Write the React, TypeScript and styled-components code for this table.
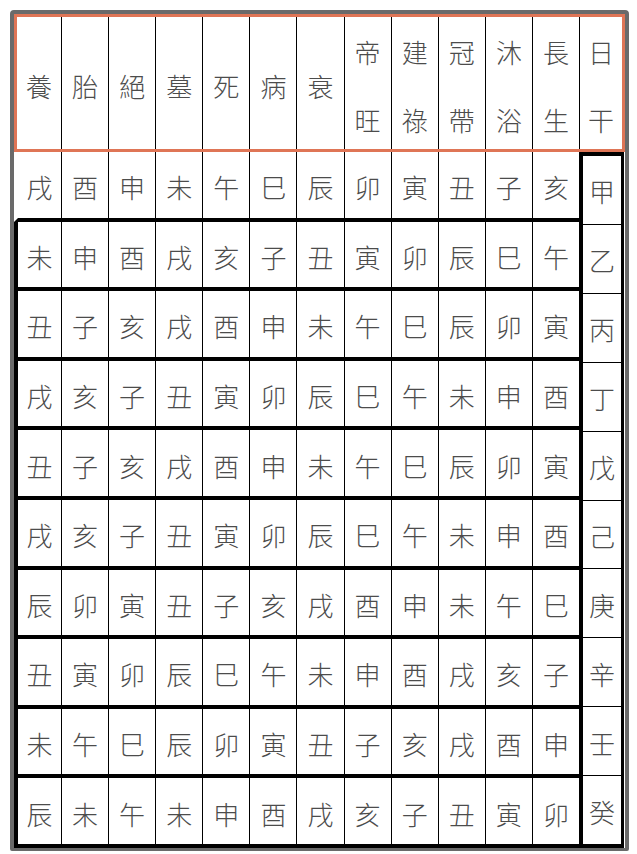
import React from 'react'
import styled, { createGlobalStyle } from 'styled-components'

const GlobalStyle = createGlobalStyle`
    html, body {
        margin: 0;
        padding: 0;
        background: #ffffff;
    }
    * {
        box-sizing: border-box;
    }
`

const Page = styled.div`
    padding: 10px;
    font-family: "Noto Sans CJK TC", "Noto Sans CJK JP", sans-serif;
    font-weight: 300;
    color: #4c4c4c;
`

const Frame = styled.div`
    width: 619px;
    border: 4px solid #6a6a6a;
    border-bottom-width: 3px;
    border-radius: 4px 4px 2px 2px;
`

const Header = styled.div`
    display: grid;
    grid-template-columns: 44px repeat(11, 47.1px) 1fr;
    height: 138px;
    border: 3px solid #df7556;
`

const HeadCell = styled.div<{ $first?: boolean }>`
    display: flex;
    flex-direction: column;
    align-items: center;
    justify-content: center;
    gap: 42px;
    padding-top: 5px;
    font-size: 26px;
    line-height: 26px;
    border-left: ${p => (p.$first ? 'none' : '1px solid #000')};
`

const Body = styled.div`
    display: flex;
    height: 696px;
`

const Rows = styled.div`
    display: flex;
    flex-direction: column;
    width: 565px;
`

const Row = styled.div<{ $open?: boolean }>`
    flex: 1;
    display: grid;
    grid-template-columns: 43px repeat(11, 1fr);
    border-left: 4px solid ${p => (p.$open ? 'transparent' : '#000')};
    border-bottom: 4px solid #000;
`

const Cell = styled.div<{ $first?: boolean }>`
    display: flex;
    align-items: center;
    justify-content: center;
    padding-top: 4px;
    font-size: 26px;
    border-left: ${p => (p.$first ? 'none' : '1px solid #000')};
`

const StemColumn = styled.div`
    flex: 1;
    display: flex;
    flex-direction: column;
    border: 4px solid #000;
    border-right-width: 3px;
    margin-right: 1px;
`

const StemCell = styled.div<{ $first?: boolean }>`
    flex: 1;
    display: flex;
    align-items: center;
    justify-content: center;
    padding-top: 2px;
    font-size: 26px;
    border-top: ${p => (p.$first ? 'none' : '1px solid #000')};
`

const heads = ['養', '胎', '絕', '墓', '死', '病', '衰', '帝旺', '建祿', '冠帶', '沐浴', '長生', '日干']

const table: { stem: string; cells: string }[] = [
    { stem: '甲', cells: '戌酉申未午巳辰卯寅丑子亥' },
    { stem: '乙', cells: '未申酉戌亥子丑寅卯辰巳午' },
    { stem: '丙', cells: '丑子亥戌酉申未午巳辰卯寅' },
    { stem: '丁', cells: '戌亥子丑寅卯辰巳午未申酉' },
    { stem: '戊', cells: '丑子亥戌酉申未午巳辰卯寅' },
    { stem: '己', cells: '戌亥子丑寅卯辰巳午未申酉' },
    { stem: '庚', cells: '辰卯寅丑子亥戌酉申未午巳' },
    { stem: '辛', cells: '丑寅卯辰巳午未申酉戌亥子' },
    { stem: '壬', cells: '未午巳辰卯寅丑子亥戌酉申' },
    { stem: '癸', cells: '辰未午未申酉戌亥子丑寅卯' },
]

export default function App() {
    return (
        <>
            <GlobalStyle />
            <Page>
                <Frame>
                    <Header>
                        {heads.map((h, i) => (
                            <HeadCell key={h} $first={i === 0}>
                                {h.split('').map(c => <span key={c}>{c}</span>)}
                            </HeadCell>
                        ))}
                    </Header>
                    <Body>
                        <Rows>
                            {table.map((r, i) => (
                                <Row key={r.stem} $open={i === 0}>
                                    {r.cells.split('').map((c, j) => (
                                        <Cell key={j} $first={j === 0}>{c}</Cell>
                                    ))}
                                </Row>
                            ))}
                        </Rows>
                        <StemColumn>
                            {table.map((r, i) => (
                                <StemCell key={r.stem} $first={i === 0}>{r.stem}</StemCell>
                            ))}
                        </StemColumn>
                    </Body>
                </Frame>
            </Page>
        </>
    )
}
